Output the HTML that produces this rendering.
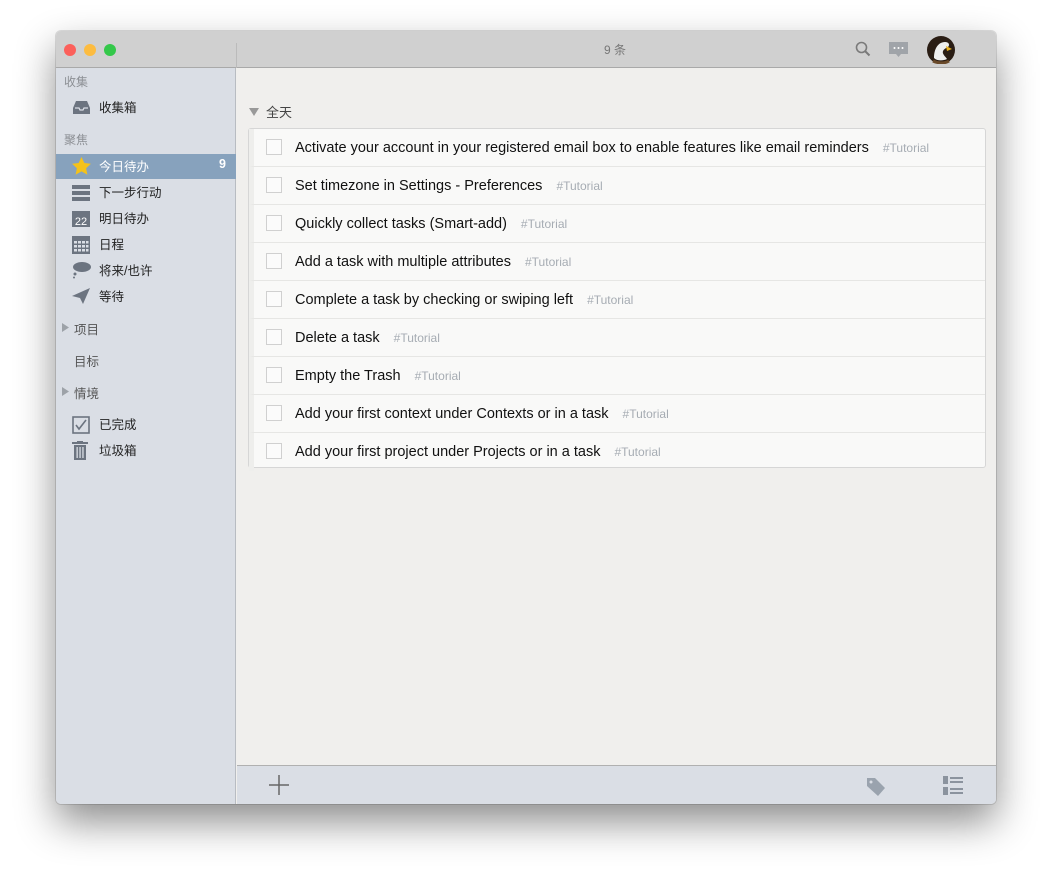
<!DOCTYPE html>
<html><head><meta charset="utf-8"><style>
*{margin:0;padding:0;box-sizing:border-box}
body{width:1052px;height:885px;background:#fff;font-family:"Liberation Sans","Noto Sans CJK SC",sans-serif;position:relative;overflow:hidden}
.win{position:absolute;left:56px;top:31px;width:940px;height:773px;border-radius:5px;overflow:hidden;box-shadow:0 18px 40px rgba(0,0,0,.45),0 0 0 1px rgba(0,0,0,.12);background:#f0efed}
.tb{position:absolute;left:0;top:0;width:940px;height:37px;background:#d0d0d0;border-bottom:1px solid #a9a9a9}
.dot{position:absolute;top:13px;width:12px;height:12px;border-radius:50%}
.side{position:absolute;left:0;top:37px;width:180px;height:736px;background:#dadee5;border-right:1px solid #b8bcc2}
.sep{position:absolute;left:180px;top:12px;width:1px;height:25px;background:#bbb}
.h{position:absolute;left:8px;font-size:12px;color:#8c8f94}
.it{position:absolute;left:43px;font-size:12.5px;color:#222}
.ic{position:absolute;left:16px}
.sel{position:absolute;left:0;top:86px;width:180px;height:25px;background:#87a2bd}
.card{position:absolute;left:192px;top:97px;width:738px;height:340px;background:#f9f9f8;border:1px solid #d6d6d6;border-radius:3px}
.row{position:relative;height:38px;border-bottom:1px solid #e6e6e4;border-left:5px solid #eeeeec}
.row:last-child{border-bottom:none}
.cb{position:absolute;left:12px;top:10px;width:16px;height:16px;border:1px solid #d0d0d0;background:#fbfbfb}
.tx{position:absolute;left:41px;top:11px;font-size:14.5px;color:#111;white-space:nowrap}
.tg{color:#a6acb3;font-size:12px;margin-left:14px}
.bb{position:absolute;left:181px;top:734px;width:759px;height:39px;background:#dadee5;border-top:1px solid #b0b0b0}
</style></head><body>
<div class="win">
<div class="tb">
<div class="dot" style="left:8px;background:#fc605b"></div>
<div class="dot" style="left:28px;background:#fdbc40"></div>
<div class="dot" style="left:48px;background:#34c84a"></div>
<div class="sep"></div>
<div style="position:absolute;left:548px;top:10px;font-size:12px;color:#777">9 条</div>
<svg style="position:absolute;left:799px;top:10px" width="16" height="16"><circle cx="6.5" cy="6.5" r="5" fill="none" stroke="#7a7a7a" stroke-width="1.6"/><line x1="10" y1="10" x2="14.5" y2="14.5" stroke="#7a7a7a" stroke-width="2"/></svg>
<svg style="position:absolute;left:833px;top:11px" width="19" height="16"><path d="M0 0h19v12h-7l-2.5 3-2.5-3H0z" fill="#a0a4a9"/><circle cx="5.5" cy="6" r="1" fill="#fff"/><circle cx="9.5" cy="6" r="1" fill="#fff"/><circle cx="13.5" cy="6" r="1" fill="#fff"/></svg>
<svg style="position:absolute;left:871px;top:5px" width="28" height="28"><circle cx="14" cy="14" r="14" fill="#2a1d14"/><path d="M7 22c0-9 4-16 11-16 4 0 5 3 3 5-2 1-4 2-5 4-1 3 2 5 4 8-4 2-10 2-13-1z" fill="#eee"/><path d="M19 10l6 3-5 2z" fill="#e8b020"/><path d="M6 25c4 2 11 3 16 0" stroke="#6a4a2a" stroke-width="3" fill="none"/></svg>
</div>
<div class="side">
<div class="h" style="top:5px">收集</div>
<svg class="ic" style="top:32px" width="19" height="15"><path d="M1 8 4 1h11l3 7v6H1z" fill="#6c7480"/><path d="M3 8h4l1 2h3l1-2h4" fill="none" stroke="#dadee5" stroke-width="1.3"/></svg>
<div class="it" style="top:29px">收集箱</div>
<div class="h" style="top:63px">聚焦</div>
<div class="sel"></div>
<svg class="ic" style="top:89px" width="19" height="18"><path d="M9.5 0l2.9 6 6.5.8-4.8 4.4 1.3 6.5-5.9-3.3-5.9 3.3 1.3-6.5L.1 6.8 6.6 6z" fill="#f4c21a"/></svg>
<div class="it" style="top:88px;color:#fff">今日待办</div>
<div style="position:absolute;left:163px;top:89px;color:#fff;font-size:12.5px;font-weight:bold">9</div>
<svg class="ic" style="top:117px" width="18" height="16" fill="#6c7480"><rect y="0" width="18" height="4"/><rect y="6" width="18" height="4"/><rect y="12" width="18" height="4"/></svg>
<div class="it" style="top:114px">下一步行动</div>
<svg class="ic" style="top:141px" width="18" height="18"><rect y="2" width="18" height="16" fill="#6c7480"/><text x="9" y="16" font-size="11" fill="#fff" text-anchor="middle" font-family="Liberation Sans">22</text></svg>
<div class="it" style="top:140px">明日待办</div>
<svg class="ic" style="top:168px" width="18" height="18" fill="#6c7480"><rect y="0" width="18" height="18"/><g fill="#dadee5"><rect x="2" y="5" width="3" height="2.5"/><rect x="6" y="5" width="3" height="2.5"/><rect x="10" y="5" width="3" height="2.5"/><rect x="14" y="5" width="2.5" height="2.5"/><rect x="2" y="9" width="3" height="2.5"/><rect x="6" y="9" width="3" height="2.5"/><rect x="10" y="9" width="3" height="2.5"/><rect x="14" y="9" width="2.5" height="2.5"/><rect x="2" y="13" width="3" height="2.5"/><rect x="6" y="13" width="3" height="2.5"/><rect x="10" y="13" width="3" height="2.5"/><rect x="14" y="13" width="2.5" height="2.5"/></g></svg>
<div class="it" style="top:166px">日程</div>
<svg class="ic" style="top:194px" width="19" height="17" fill="#6c7480"><ellipse cx="10" cy="5" rx="9" ry="5"/><circle cx="3" cy="12" r="1.5"/><circle cx="2" cy="15.5" r="1"/></svg>
<div class="it" style="top:192px">将来/也许</div>
<svg class="ic" style="top:220px" width="18" height="16" fill="#6c7480"><path d="M0 8 18 0 11 16 8 10z"/></svg>
<div class="it" style="top:218px">等待</div>
<svg style="position:absolute;left:6px;top:255px" width="7" height="9"><path d="M0 0l7 4.5L0 9z" fill="#9da2a8"/></svg>
<div class="h" style="top:251px;left:18px;color:#555;font-size:12.5px">项目</div>
<div class="h" style="top:283px;left:18px;color:#555;font-size:12.5px">目标</div>
<svg style="position:absolute;left:6px;top:319px" width="7" height="9"><path d="M0 0l7 4.5L0 9z" fill="#9da2a8"/></svg>
<div class="h" style="top:315px;left:18px;color:#555;font-size:12.5px">情境</div>
<svg class="ic" style="top:348px" width="18" height="18"><rect x="1" y="1" width="16" height="16" fill="none" stroke="#6c7480" stroke-width="1.6"/><path d="M4 9l3 4 7-9" fill="none" stroke="#6c7480" stroke-width="1.6"/></svg>
<div class="it" style="top:346px">已完成</div>
<svg class="ic" style="top:373px" width="16" height="19" fill="#6c7480"><rect x="0" y="1" width="16" height="2"/><rect x="5" y="0" width="6" height="2"/><path d="M2 4h12v15H2z"/><g fill="#dadee5"><rect x="4.5" y="6" width="1.3" height="11"/><rect x="7.4" y="6" width="1.3" height="11"/><rect x="10.3" y="6" width="1.3" height="11"/></g></svg>
<div class="it" style="top:372px">垃圾箱</div>
</div>
<svg style="position:absolute;left:193px;top:77px" width="10" height="8"><path d="M0 0h10L5 8z" fill="#999"/></svg>
<div style="position:absolute;left:210px;top:71px;font-size:13px;color:#444">全天</div>
<div class="card">
<div class="row"><div class="cb"></div><div class="tx">Activate your account in your registered email box to enable features like email reminders<span class="tg">#Tutorial</span></div></div>
<div class="row"><div class="cb"></div><div class="tx">Set timezone in Settings - Preferences<span class="tg">#Tutorial</span></div></div>
<div class="row"><div class="cb"></div><div class="tx">Quickly collect tasks (Smart-add)<span class="tg">#Tutorial</span></div></div>
<div class="row"><div class="cb"></div><div class="tx">Add a task with multiple attributes<span class="tg">#Tutorial</span></div></div>
<div class="row"><div class="cb"></div><div class="tx">Complete a task by checking or swiping left<span class="tg">#Tutorial</span></div></div>
<div class="row"><div class="cb"></div><div class="tx">Delete a task<span class="tg">#Tutorial</span></div></div>
<div class="row"><div class="cb"></div><div class="tx">Empty the Trash<span class="tg">#Tutorial</span></div></div>
<div class="row"><div class="cb"></div><div class="tx">Add your first context under Contexts or in a task<span class="tg">#Tutorial</span></div></div>
<div class="row"><div class="cb"></div><div class="tx">Add your first project under Projects or in a task<span class="tg">#Tutorial</span></div></div>
</div>
<div class="bb">
<svg style="position:absolute;left:31px;top:8px" width="22" height="22"><path d="M11 1v20M1 11h20" stroke="#666" stroke-width="1.5"/></svg>
<svg style="position:absolute;left:628px;top:10px" width="22" height="22"><path d="M2 2h8l10 10-7 8L2 10z" fill="#9aa3ae"/><circle cx="6" cy="6" r="1.5" fill="#dadee5"/></svg>
<svg style="position:absolute;left:706px;top:10px" width="22" height="20" fill="#8b939e"><rect x="0" y="0" width="5" height="8"/><rect x="0" y="11" width="5" height="8"/><rect x="7" y="1" width="13" height="2"/><rect x="7" y="5" width="13" height="2"/><rect x="7" y="12" width="13" height="2"/><rect x="7" y="16" width="13" height="2"/></svg>
</div>
</div>
</body></html>
